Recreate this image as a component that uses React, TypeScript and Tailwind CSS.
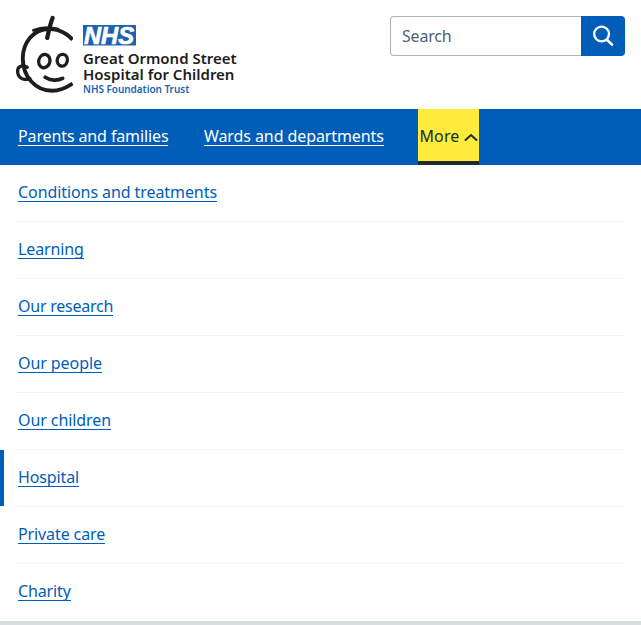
const links: { label: string; tracking: string; active?: boolean }[] = [
  { label: 'Conditions and treatments', tracking: 'tracking-[-0.08px]' },
  { label: 'Learning', tracking: 'tracking-[-0.13px]' },
  { label: 'Our research', tracking: 'tracking-[-0.24px]' },
  { label: 'Our people', tracking: 'tracking-[-0.08px]' },
  { label: 'Our children', tracking: 'tracking-[-0.09px]' },
  { label: 'Hospital', tracking: 'tracking-[-0.12px]', active: true },
  { label: 'Private care', tracking: 'tracking-[-0.11px]' },
  { label: 'Charity', tracking: 'tracking-[-0.12px]' },
];

function Logo() {
  return (
    <div className="relative flex h-20 w-56 pt-[10px] pl-[68px]">
      <svg className="absolute top-0 left-0" width="58" height="80" viewBox="15 15 58 80" aria-hidden="true">
        <g fill="none" stroke="#1d1d1b" strokeLinecap="round" strokeLinejoin="round">
          <path strokeWidth="3.9" strokeLinecap="butt" d="M72.6 39.6C67 33.6 60 29.5 51 29C33 28 23 43 22.8 58C22.6 77 36 90.8 52 90.8C59.5 90.8 66 88 72.6 83.5" />
          <path strokeWidth="3" d="M33.5 30.3C40 27.8 49 26.8 58 29.3" />
          <path strokeWidth="4.3" d="M52.6 18C50.5 23 49 30 47.2 37.9" />
          <path strokeWidth="3.3" d="M27.2 67.2C21.5 64.5 17.5 66.5 17.6 71.5C17.8 78 23.5 81 30 78.6" />
          <ellipse cx="44.3" cy="61.1" rx="5.6" ry="6.7" strokeWidth="3.3" transform="rotate(15 44.3 61.1)" />
          <ellipse cx="62.3" cy="60.2" rx="5.1" ry="5.9" strokeWidth="3.3" transform="rotate(10 62.3 60.2)" />
          <path strokeWidth="3.8" d="M45.2 77.3C50 80.6 57.5 80.9 62.6 78.4" />
        </g>
      </svg>
      <div className="flex flex-col items-start whitespace-nowrap font-semibold text-[#1d1d1b]">
        <svg className="block overflow-visible" width="53" height="21" viewBox="83 25 53 21">
          <path fill="#1d63b0" d="M83 25h53v20.5H83z" />
          <text x="84" y="43.7" textLength="50" lengthAdjust="spacingAndGlyphs" fill="#fff" stroke="#fff" strokeWidth=".7" className="font-['Liberation_Sans',Arial,sans-serif] text-[23px] font-bold italic">NHS</text>
        </svg>
        <span className="mt-[4px] text-[15px] leading-4">Great Ormond Street</span>
        <span className="text-[15px] leading-4">Hospital for Children</span>
        <span className="text-[10px] leading-[14px] tracking-[-0.04px] text-[#1d63b0]">NHS Foundation Trust</span>
      </div>
    </div>
  );
}

function NavLink({ label, tracking }: { label: string; tracking: string }) {
  return (
    <a href="#" className={`block h-[18px] border-b border-current leading-[16px] whitespace-nowrap ${tracking}`}>{label}</a>
  );
}

export default function App() {
  return (
    <div className="h-[625px] w-full overflow-hidden bg-white font-['Noto_Sans',sans-serif] text-[16px] text-[#005eb8]">
      <header className="flex h-[109px] items-start justify-between pt-[15px] pr-4 pl-[15px]">
        <Logo />
        <form className="mt-px flex h-10 w-[235px]" onSubmit={(e) => e.preventDefault()}>
          <input aria-label="Search" placeholder="Search" className="h-10 w-[191px] rounded-l border border-r-0 border-[#aeb7bd] bg-white pl-[11px] text-[16px] tracking-[-0.2px] outline-none placeholder:text-[#4c6272]" />
          <button aria-label="Submit search" className="flex h-10 w-11 items-center justify-center rounded-r bg-[#005eb8]">
            <svg width="22" height="22" viewBox="0 0 22 22" fill="none" stroke="white">
              <circle cx="9.6" cy="9" r="7.4" strokeWidth="2.4" />
              <path d="m15 14.8 5 4.8" strokeWidth="2.7" strokeLinecap="round" />
            </svg>
          </button>
        </form>
      </header>
      <nav>
        <div className="flex h-14 bg-[#005eb8] pl-[18px] text-white">
          <div className="flex w-[186px] pt-[19px]"><NavLink label="Parents and families" tracking="tracking-[-0.12px]" /></div>
          <div className="flex w-[214px] pt-[19px]"><NavLink label="Wards and departments" tracking="tracking-[-0.09px]" /></div>
          <button className="flex h-14 w-[61px] items-start gap-[5px] border-b-4 border-[#212b32] bg-[#ffeb3b] pt-[19px] pl-[1.5px] leading-[16px] text-[#212b32]">
            <span className="tracking-[0.1px]">More</span>
            <svg className="mt-px block h-4 w-[14px] shrink-0" viewBox="0 0 14 16">
              <path d="m1.5 11 5.5-5 5.5 5" fill="none" stroke="currentColor" strokeWidth="2" strokeLinecap="round" />
            </svg>
          </button>
        </div>
        <ul className="border-b-4 border-[#d8dde0]">
          {links.map(({ label, tracking, active }) => (
            <li key={label} className="group flex h-[57px]">
              <span className={active ? 'h-14 w-1 bg-[#005eb8]' : 'h-14 w-1'} />
              <div className="mr-4 ml-3 flex flex-1 border-b border-[#f0f4f5] pt-[19px] pl-[2px] group-last:border-b-0">
                <NavLink label={label} tracking={tracking} />
              </div>
            </li>
          ))}
        </ul>
      </nav>
    </div>
  );
}
